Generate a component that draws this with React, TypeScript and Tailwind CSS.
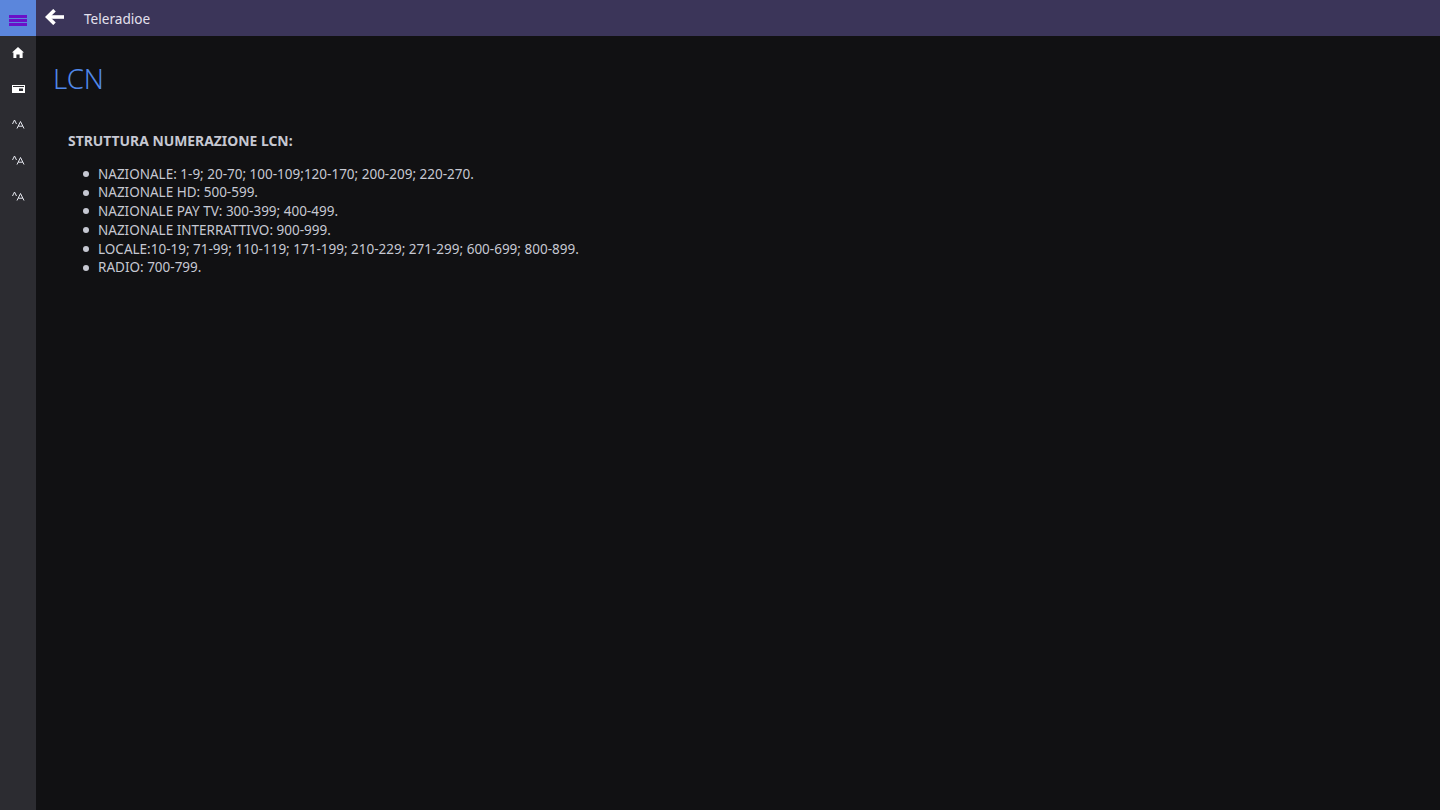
import React from "react";

const items = [
  "NAZIONALE: 1-9; 20-70; 100-109;120-170; 200-209; 220-270.",
  "NAZIONALE HD: 500-599.",
  "NAZIONALE PAY TV: 300-399; 400-499.",
  "NAZIONALE INTERRATTIVO: 900-999.",
  "LOCALE:10-19; 71-99; 110-119; 171-199; 210-229; 271-299; 600-699; 800-899.",
  "RADIO: 700-799.",
];

function FontIcon() {
  return (
    <div className="flex h-9 w-9 items-center justify-center pb-[4px]">
      <svg width="13" height="10" viewBox="0 0 13 10" fill="none" stroke="#e6e8f0" strokeWidth="1">
        <path d="M0.5 5 2.5 1 4.5 5" />
        <path d="M5 9.5 8.5 2.5 12 9.5M6.3 7.2H10.7" />
      </svg>
    </div>
  );
}

export default function App() {
  return (
    <div className="flex h-[810px] w-[1440px] flex-col overflow-hidden bg-[#111113] font-['Noto_Sans','Open_Sans',sans-serif]">
      <header className="flex h-9 shrink-0 items-center bg-[#3b3559]">
        <div className="flex h-9 w-9 items-center justify-center bg-[#5b86dc] pt-[4px]">
          <div className="flex w-[18px] flex-col gap-[1px]">
            <div className="h-[3px] bg-[#6a10c8]" />
            <div className="h-[3px] bg-[#6a10c8]" />
            <div className="h-[3px] bg-[#6a10c8]" />
          </div>
        </div>
        <div className="flex h-9 w-[48px] items-center justify-center pb-[3px] pr-[12px]">
          <svg width="19" height="16" viewBox="0 0 19 16" fill="none" stroke="#ffffff" strokeWidth="3.6">
            <path d="M19 8H3" />
            <path d="M9.5 1.2 2.5 8l7 6.8" />
          </svg>
        </div>
        <span className="pt-[3px] text-[13.6px] text-[#e4e1ee]">Teleradioe</span>
      </header>
      <div className="flex min-h-0 flex-1">
        <aside className="flex w-9 shrink-0 flex-col bg-[#2c2c31]">
          <div className="flex h-9 w-9 items-center justify-center pb-[3px]">
            <svg width="12" height="11" viewBox="0 0 12 11" fill="#ffffff">
              <path d="M6 0 12 5.6 10.6 5.6V11H7.6V7.4H4.4V11H1.4V5.6H0Z" />
            </svg>
          </div>
          <div className="flex h-9 w-9 items-center justify-center pb-[2px]">
            <svg width="13" height="8" viewBox="0 0 13 8">
              <path d="M0 0H13V8H0Z" fill="#ffffff" />
              <path d="M1 1H12V2H1Z" fill="#2c2c31" />
              <path d="M7 3.5H11V6H7Z" fill="#2c2c31" />
            </svg>
          </div>
          <FontIcon />
          <FontIcon />
          <FontIcon />
        </aside>
        <main className="flex-1 pl-[17px]">
          <h1 className="mt-[24px] text-[27.6px] font-light leading-[36px] text-[#5088e8]">LCN</h1>
          <div className="ml-[15px] mt-[35px] text-[13.5px] text-[#c6c8d2]">
            <p className="text-[13.9px] font-bold leading-[19px]">STRUTTURA NUMERAZIONE LCN:</p>
            <ul className="ml-[15px] mt-[14.5px] leading-[18.75px]">
              {items.map((t) => (
                <li key={t} className="flex items-center">
                  <span className="mr-[9px] h-[6px] w-[6px] shrink-0 rounded-full bg-[#c6c8d2]" />
                  {t}
                </li>
              ))}
            </ul>
          </div>
        </main>
      </div>
    </div>
  );
}
